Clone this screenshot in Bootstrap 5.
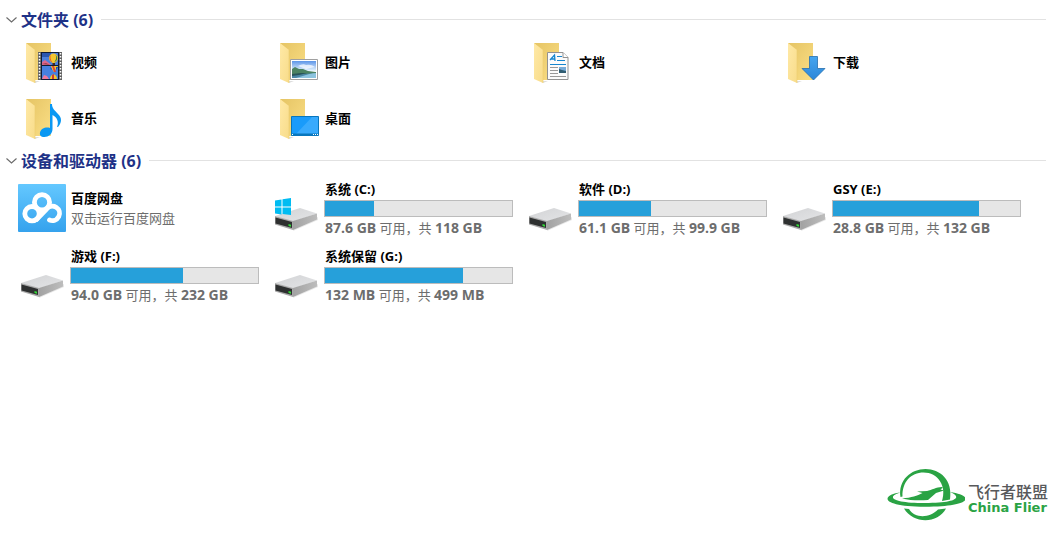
<!DOCTYPE html>
<html lang="zh-CN">
<head>
<meta charset="utf-8">
<meta name="viewport" content="width=device-width, initial-scale=1">
<title>此电脑</title>
<link href="https://cdn.jsdelivr.net/npm/bootstrap@5.3.0/dist/css/bootstrap.min.css" rel="stylesheet">
<style>
body{font-family:"Open Sans","Noto Sans CJK SC",sans-serif;font-size:13px;line-height:18px;color:#000;background:#fff}
.explorer{padding:5px 7px 0 6px}
.group-head{margin:3px 0;height:23px}
.group-toggle{font-size:16px;line-height:22px;font-weight:700;color:#1e3287;gap:4px}
.group-rule{height:1px;background:#e2e2e2}
.tiles{display:grid;grid-template-columns:repeat(auto-fill,254px);padding-left:12px}
.tile{color:inherit;gap:4px;padding-right:13px}
.tile-folder{height:56px}
.tile-device{height:67px}
.tile-name{font-weight:700;line-height:18px;padding-left:1px}
.tile-note{color:#6d6d6d;line-height:18px;padding-left:1px;white-space:nowrap}
.tile-note b{font-size:14px;font-weight:700}
.tile-app{padding-bottom:2px}
.tile-app .tile-name{margin-bottom:2px}
.usage{height:17px;margin:2px 0;border:1px solid #bcbcbc;border-radius:0;background:#e6e6e6}
.usage .progress-bar{background:#26a0da}
.brand{gap:3px;padding:0 5px 20px 0}
.brand-text{padding-top:8px}
.brand-cn{font:500 16px/18px "Noto Sans CJK SC",sans-serif;color:#58595b}
.brand-en{font:700 13px/16px "DejaVu Sans","Liberation Sans",sans-serif;color:#2aa344}
</style>
</head>
<body class="d-flex flex-column min-vh-100">
<svg width="0" height="0" class="position-absolute" aria-hidden="true">
  <defs>
    <linearGradient id="gBack" x1="0" y1="0" x2="1" y2="1"><stop offset="0" stop-color="#e5c464"/><stop offset="1" stop-color="#fbdf86"/></linearGradient>
    <linearGradient id="gFlap" x1="0" y1="0" x2="1" y2="1"><stop offset="0" stop-color="#ffe9a6"/><stop offset="1" stop-color="#f8dc8a"/></linearGradient>
    <linearGradient id="gTop" x1="0" y1="0" x2="1" y2="1"><stop offset="0" stop-color="#d2d3d5"/><stop offset="1" stop-color="#e4e5e7"/></linearGradient>
    <linearGradient id="gSide" x1="0" y1="0" x2="1" y2="0"><stop offset="0" stop-color="#a2a2a2"/><stop offset="1" stop-color="#bdbdbd"/></linearGradient>
    <linearGradient id="gPan" x1="0" y1="0" x2="0" y2="1"><stop offset="0" stop-color="#64c8ff"/><stop offset="1" stop-color="#35a2ed"/></linearGradient>
    <linearGradient id="gSky" x1="0" y1="0" x2="0" y2="1"><stop offset="0" stop-color="#5d95e8"/><stop offset="1" stop-color="#e8f5fd"/></linearGradient>
    <linearGradient id="gArrow" x1="0" y1="0" x2="0" y2="1"><stop offset="0" stop-color="#45a5ef"/><stop offset="1" stop-color="#2c86d8"/></linearGradient>
  </defs>
  <symbol id="folder" viewBox="0 0 48 48">
    <path d="M17 45l5-2h-5z" fill="#ddd"/>
    <path d="M8 5h25v37H17z" fill="url(#gBack)"/>
    <path d="M8 5l9 7v33l-9-4z" fill="url(#gFlap)"/>
    <path d="M17 12v33" stroke="#edcc71" stroke-width=".6"/>
  </symbol>
  <symbol id="drive" viewBox="0 0 48 48">
    <path d="M21 46l25-11v-3l-24 11z" fill="#e8e8e8"/>
    <path d="M3 31l25-8 17 5.500-24 8z" fill="url(#gTop)"/>
    <path d="M21 36l24-7.500v6L21 45z" fill="url(#gSide)"/>
    <path d="M3 31l18 5v9L3 39.500z" fill="#a9a9a9"/>
    <path d="M3.500 32.500l16.500 4.500v6L3.500 38.500z" fill="#2e3030"/>
    <path d="M16.500 39l2.500 .700v2l-2.500-.700z" fill="#31dc35"/>
  </symbol>
  <symbol id="chev" viewBox="0 0 11 6"><path d="M.5 .5l5 4.500 5-4.500" fill="none" stroke="#6a6a6a" stroke-width="1.100"/></symbol>
</svg>

<main class="explorer">
  <section>
    <h2 class="group-head d-flex align-items-center">
      <button class="group-toggle btn border-0 p-0 d-flex align-items-center" type="button" data-bs-toggle="collapse" data-bs-target="#folders" aria-expanded="true" aria-controls="folders"><svg width="11" height="6"><use href="#chev"/></svg>文件夹 (6)</button>
      <span class="group-rule flex-grow-1 ms-2"></span>
    </h2>
    <div class="collapse show" id="folders">
      <div class="tiles">
        <a href="#videos" class="tile tile-folder d-flex align-items-center text-decoration-none">
          <svg width="48" height="48"><use href="#folder"/>
            <path fill="#606060" d="M20 14h24v28H20z"/>
            <path stroke="#fff" stroke-width="1.500" stroke-dasharray="1.500 1.500" d="M21.500 15v27M42.500 15v27"/>
            <path fill="#101c35" d="M23 14h18v28H23z"/>
            <path fill="#4b80dc" d="M24 15h16v12H24z"/><path fill="#2b57b0" d="M24 15h9v4h-9z"/>
            <path fill="#d9698f" d="M24 24l3-2 4 3 2 2h-9z"/><path fill="#a63d4b" d="M24 26l4-1 4 2z"/>
            <path fill="#f5c62e" d="M31 20c0-6 9-6 9 0 0 3-3 5-4.500 5S31 23 31 20z"/><path fill="#dd5134" d="M33 16.500c-1 2-1 5 1.500 8L33 23.500c-2-2-2-5 0-7z"/><path fill="#287d49" d="M37 16.500c2 2 1.500 5-1 8l2-1.500c2-2 1.500-5-1-6.500z"/><path fill="#452d21" d="M34.500 25h2.500v2h-2.500z"/>
            <path fill="#4780df" d="M24 28h16v13H24z"/><path fill="#f3c42f" d="M33 28h7l-2 3-2 3-2-3z"/><path fill="#dd4334" d="M34 28h2l2 6h-2z"/><path fill="#1b4fa7" d="M32 29l2 2-1 1zM38 29h2l-2 3z"/>
            <path fill="#f0799c" d="M24 41l2-4 3 1 2 3z"/><path fill="#f4c52b" d="M32 41c0-6 7-6 7 0z"/><path fill="#cc3c38" d="M34 37l2-1v5h-2z"/>
          </svg><span class="tile-name">视频</span></a>
        <a href="#pictures" class="tile tile-folder d-flex align-items-center text-decoration-none">
          <svg width="48" height="48"><use href="#folder"/>
            <path fill="#fff" stroke="#a0a0a0" d="M18.500 21.500h27v20h-27z"/>
            <path fill="url(#gSky)" d="M20 23h24v10H20z"/><path fill="#fff" opacity=".7" d="M26 28q5-3 8-1 5-1 9 2l-9 2z"/>
            <path fill="#4b86a5" d="M20 34h24v6H20z"/><path fill="#8cc3de" d="M24 40l20-6v6z"/>
            <path fill="#4b8262" d="M20 31l3-2 4 2 4 0 5 2 8 1v1l-13 1-11 1z"/><path fill="#28545a" d="M20 36l9-1 6 0-8 2-7 1z"/>
          </svg><span class="tile-name">图片</span></a>
        <a href="#documents" class="tile tile-folder d-flex align-items-center text-decoration-none">
          <svg width="48" height="48"><use href="#folder"/>
            <path fill="#fbfbfb" stroke="#929292" d="M21.500 14.500H37l5 5v22H21.500z"/><path fill="#fff" stroke="#929292" d="M37 14.500v5h5"/>
            <path fill="none" stroke="#1686cf" stroke-width="1.300" d="M24 22l4.500-5 .500 6M25 21h4"/>
            <path stroke="#1686cf" d="M31 18.500h5M31 22.500h8M24 26.500h16"/>
            <path stroke="#999" d="M24 29.500h8M24 32.500h8M24 35.500h8M24 38.500h16"/>
            <path fill="#78acd9" d="M33 29h7v6h-7z"/><path fill="#315d72" d="M33 31l3 1 4 1v2h-7z"/>
          </svg><span class="tile-name">文档</span></a>
        <a href="#downloads" class="tile tile-folder d-flex align-items-center text-decoration-none">
          <svg width="48" height="48"><use href="#folder"/><path fill="url(#gArrow)" stroke="#246fae" stroke-width=".8" d="M29.500 18.500h8v12H45L33.500 42 22 30.500h7.500z"/></svg><span class="tile-name">下载</span></a>
        <a href="#music" class="tile tile-folder d-flex align-items-center text-decoration-none">
          <svg width="48" height="48"><use href="#folder"/><path fill="#0a98f3" d="M32 10h2c0 5 3 6 6 10 4 4 4 8 0 13-1 0-1-.500-.700-1C41 28 39 23 34.500 21v14c0 5-4 8-8 8s-5-2-4.500-4.500c.700-4 6-6 10-4.500z"/></svg><span class="tile-name">音乐</span></a>
        <a href="#desktop" class="tile tile-folder d-flex align-items-center text-decoration-none">
          <svg width="48" height="48"><use href="#folder"/><path fill="#199bfa" stroke="#0876bd" d="M19.500 22.500h27v19h-27z"/><path fill="#38aafd" d="M46 23v17H24l16-17z"/><path fill="#0876bd" d="M20 39.500h26V41H20z"/><path stroke="#fff" d="M20 40.500h1M41 40.500h1M43 40.500h1M45 40.500h1"/></svg><span class="tile-name">桌面</span></a>
      </div>
    </div>
  </section>

  <section>
    <h2 class="group-head d-flex align-items-center">
      <button class="group-toggle btn border-0 p-0 d-flex align-items-center" type="button" data-bs-toggle="collapse" data-bs-target="#devices" aria-expanded="true" aria-controls="devices"><svg width="11" height="6"><use href="#chev"/></svg>设备和驱动器 (6)</button>
      <span class="group-rule flex-grow-1 ms-2"></span>
    </h2>
    <div class="collapse show" id="devices">
      <div class="tiles">
        <a href="#netdisk" class="tile tile-device tile-app d-flex align-items-center text-decoration-none">
          <svg width="48" height="48"><rect width="48" height="48" rx="1" fill="url(#gPan)"/>
            <g fill="none" stroke="#fff" stroke-width="4.800" stroke-linecap="round"><circle cx="24" cy="18.300" r="7.600"/><circle cx="14" cy="29.700" r="7.200"/><path d="M18.500 35.500L28.500 25.200A7.200 7.200 0 1 1 31.500 36"/></g></svg>
          <div><div class="tile-name">百度网盘</div><div class="tile-note">双击运行百度网盘</div></div></a>
        <a href="#c" class="tile tile-device d-flex align-items-center text-decoration-none">
          <svg class="flex-shrink-0" width="48" height="48"><use href="#drive"/><path fill="#00bcf2" d="M3 15.500l6.500-1v7H3zM10.500 14.300L19 13v8.500h-8.500zM3 22.500h6.500v7L3 28.500zM10.500 22.500H19V30l-8.500-1z"/></svg>
          <div class="flex-grow-1"><div class="tile-name">系统 (C:)</div><div class="usage progress" role="progressbar" aria-label="系统 (C:)" aria-valuenow="26" aria-valuemin="0" aria-valuemax="100"><div class="progress-bar" style="width:26%"></div></div><div class="tile-note"><b>87.6 GB</b> 可用，共 <b>118 GB</b></div></div></a>
        <a href="#d" class="tile tile-device d-flex align-items-center text-decoration-none">
          <svg class="flex-shrink-0" width="48" height="48"><use href="#drive"/></svg>
          <div class="flex-grow-1"><div class="tile-name">软件 (D:)</div><div class="usage progress" role="progressbar" aria-label="软件 (D:)" aria-valuenow="39" aria-valuemin="0" aria-valuemax="100"><div class="progress-bar" style="width:38.6%"></div></div><div class="tile-note"><b>61.1 GB</b> 可用，共 <b>99.9 GB</b></div></div></a>
        <a href="#e" class="tile tile-device d-flex align-items-center text-decoration-none">
          <svg class="flex-shrink-0" width="48" height="48"><use href="#drive"/></svg>
          <div class="flex-grow-1"><div class="tile-name">GSY (E:)</div><div class="usage progress" role="progressbar" aria-label="GSY (E:)" aria-valuenow="78" aria-valuemin="0" aria-valuemax="100"><div class="progress-bar" style="width:78.2%"></div></div><div class="tile-note"><b>28.8 GB</b> 可用，共 <b>132 GB</b></div></div></a>
        <a href="#f" class="tile tile-device d-flex align-items-center text-decoration-none">
          <svg class="flex-shrink-0" width="48" height="48"><use href="#drive"/></svg>
          <div class="flex-grow-1"><div class="tile-name">游戏 (F:)</div><div class="usage progress" role="progressbar" aria-label="游戏 (F:)" aria-valuenow="60" aria-valuemin="0" aria-valuemax="100"><div class="progress-bar" style="width:60%"></div></div><div class="tile-note"><b>94.0 GB</b> 可用，共 <b>232 GB</b></div></div></a>
        <a href="#g" class="tile tile-device d-flex align-items-center text-decoration-none">
          <svg class="flex-shrink-0" width="48" height="48"><use href="#drive"/></svg>
          <div class="flex-grow-1"><div class="tile-name">系统保留 (G:)</div><div class="usage progress" role="progressbar" aria-label="系统保留 (G:)" aria-valuenow="74" aria-valuemin="0" aria-valuemax="100"><div class="progress-bar" style="width:74%"></div></div><div class="tile-note"><b>132 MB</b> 可用，共 <b>499 MB</b></div></div></a>
      </div>
    </div>
  </section>
</main>

<footer class="brand d-flex align-items-center justify-content-end mt-auto">
  <svg width="79" height="52" viewBox="0 0 79 52" fill="#2aa344" role="img" aria-label="China Flier">
    <path d="M14.500 28C12 11 25 0 39.500 0S67 11 64 30.500l-8 1.500C61 17 52 3.500 37.500 3.500 25 3.500 16 13 16.500 27.500z"/>
    <path d="M15.500 23.300C-6 26-6 37.700 39 37.700c47 0 50-11 25-14.700C77 28.500 70 34 39 34 8 34-2 28 15.500 23.300z"/>
    <path d="M18 39.500C27 55 52 55 60 39.500l-8 1C44 49 29 50 23 40z"/>
    <path d="M16 29.500c10-1 15-2.500 20.500-5.500L31 22.500l10-.500c5-1 9-4 15-4 1.500 0 0 1.500-1.500 2.500l3.500 1-8 2.500-8 7c-8 .500-18 .500-26-1.500z"/>
  </svg>
  <div class="brand-text"><div class="brand-cn">飞行者联盟</div><div class="brand-en">China Flier</div></div>
</footer>
<script src="https://cdn.jsdelivr.net/npm/bootstrap@5.3.0/dist/js/bootstrap.bundle.min.js"></script>
</body>
</html>
